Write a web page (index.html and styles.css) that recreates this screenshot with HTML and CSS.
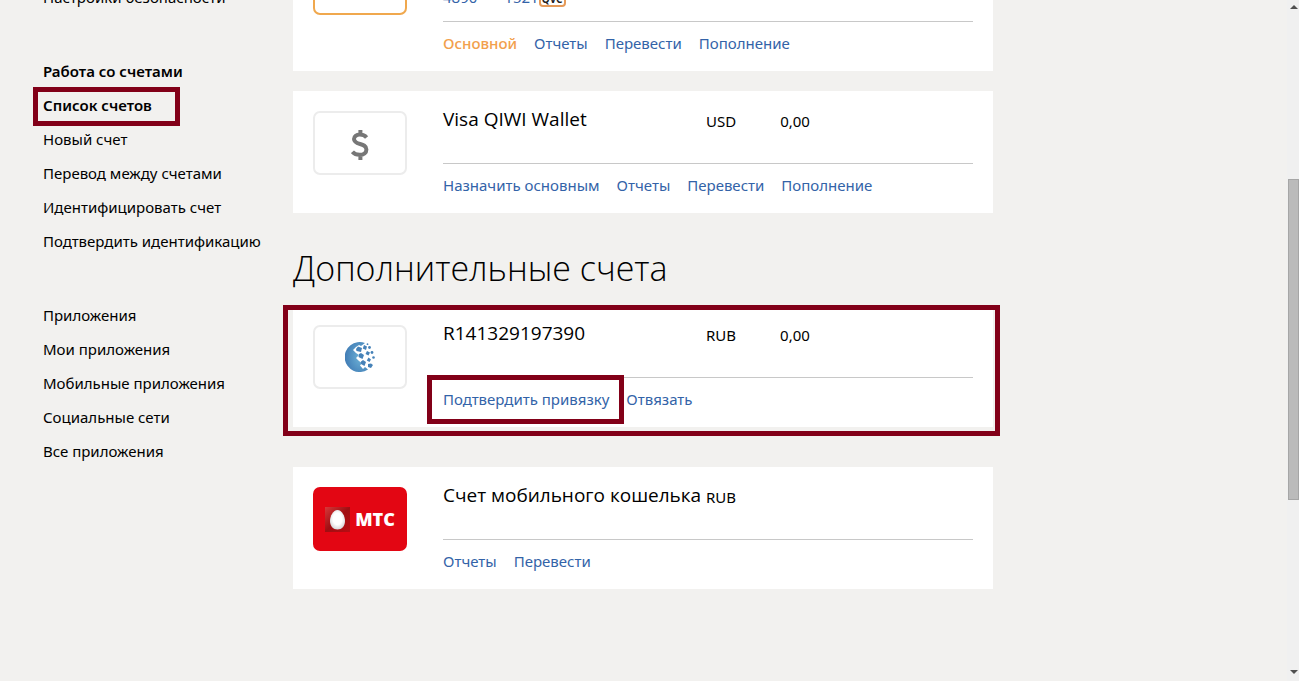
FILE: index.html
```
<!DOCTYPE html>
<html lang="ru">
<head>
<meta charset="utf-8">
<title>Список счетов</title>
<link rel="stylesheet" href="styles.css">
</head>
<body>
<div class="viewport">
  <div class="page">
    <nav class="sidebar">
      <ul class="menu">
        <li><a href="#">Настройки безопасности</a></li>
      </ul>
      <ul class="menu">
        <li><a class="strong" href="#">Работа со счетами</a></li>
        <li class="marked"><a class="strong" href="#">Список счетов</a><span class="frame frame-menu"></span></li>
        <li><a href="#">Новый счет</a></li>
        <li><a href="#">Перевод между счетами</a></li>
        <li><a href="#">Идентифицировать счет</a></li>
        <li><a href="#">Подтвердить идентификацию</a></li>
      </ul>
      <ul class="menu">
        <li><a href="#">Приложения</a></li>
        <li><a href="#">Мои приложения</a></li>
        <li><a href="#">Мобильные приложения</a></li>
        <li><a href="#">Социальные сети</a></li>
        <li><a href="#">Все приложения</a></li>
      </ul>
    </nav>
    <main class="content">
      <section class="cards">
        <article class="card">
          <div class="logo logo-active"></div>
          <div class="body">
            <div class="info info-tall">
              <div class="number"><span>4890</span><span>1521</span><span class="cvv">QVC</span></div>
            </div>
            <div class="actions">
              <span class="primary">Основной</span>
              <a href="#">Отчеты</a>
              <a href="#">Перевести</a>
              <a href="#">Пополнение</a>
            </div>
          </div>
        </article>
        <article class="card">
          <div class="logo logo-dollar">
            <svg width="18" height="32" viewBox="0 0 18 32" fill="none" stroke="#777" stroke-width="4">
              <path d="M15.6 8.6C13.8 6.4 11.6 5.6 8.8 5.6C5.4 5.6 3 7.4 3 10C3 16.6 15.4 13.4 15.4 20.4C15.4 23.8 12.8 25.8 8.6 25.8C5.6 25.8 3 24.8 1.4 22.8M9.4 1V6M9.4 25V31"/>
            </svg>
          </div>
          <div class="body">
            <div class="info">
              <h2 class="name">Visa QIWI Wallet</h2>
              <div class="money"><span>USD</span><span>0,00</span></div>
            </div>
            <div class="actions">
              <a href="#">Назначить основным</a>
              <a href="#">Отчеты</a>
              <a href="#">Перевести</a>
              <a href="#">Пополнение</a>
            </div>
          </div>
        </article>
      </section>
      <h1 class="heading">Дополнительные счета</h1>
      <section class="cards cards-extra">
        <article class="card">
          <div class="logo">
            <svg width="30" height="30" viewBox="0 0 30 30">
              <defs>
                <radialGradient id="globe" cx="0.7" cy="0.5" r="0.8">
                  <stop offset="0" stop-color="#6fb4d8"/>
                  <stop offset="1" stop-color="#3a74b0"/>
                </radialGradient>
              </defs>
              <path fill="url(#globe)" d="M20 1A15 15 0 1 0 23 27.5L20 25L18 27L15 23.5L17 21L14 19L11 16L14 13L11 11L8 8L11 5L14 3L16 4Z"/>
              <g fill="#4682b8">
                <path d="M13 4.5L17 6L16 10L11.5 9L11 7ZM16 11L19 13L17.5 17L13.5 15L14 12ZM18 18L21 20L19.5 24L16 22L16 19.5Z"/>
                <path d="M19 3L22 4.5L21 8L17.8 6.5ZM22 9L25 10.5L23.5 13.5L20.5 12ZM23.5 15.5L26 17.5L24.5 20L21.8 18.5ZM23 22L26 21.5L28 23L26 26L23 25Z"/>
                <circle cx="24.5" cy="5.5" r="1.4"/>
                <circle cx="27" cy="10.5" r="1.4"/>
                <circle cx="28.5" cy="15.5" r="1.3"/>
                <circle cx="22.5" cy="2.2" r="0.9"/>
              </g>
            </svg>
          </div>
          <div class="body">
            <div class="info">
              <h2 class="name">R141329197390</h2>
              <div class="money"><span>RUB</span><span>0,00</span></div>
            </div>
            <div class="actions">
              <span class="marked"><a href="#">Подтвердить привязку</a><span class="frame frame-link"></span></span>
              <a href="#">Отвязать</a>
            </div>
          </div>
          <span class="frame frame-card"></span>
        </article>
        <article class="card">
          <div class="logo logo-mts">
            <svg width="25" height="25" viewBox="0 0 25 25">
              <defs>
                <linearGradient id="box" x1="0" y1="0" x2="1" y2="1">
                  <stop offset="0" stop-color="#d8383a"/>
                  <stop offset="0.5" stop-color="#a00e12"/>
                  <stop offset="1" stop-color="#b80d13"/>
                </linearGradient>
                <radialGradient id="egg" cx="0.5" cy="0.45" r="0.6">
                  <stop offset="0.5" stop-color="#fff"/>
                  <stop offset="1" stop-color="#cfcfd2"/>
                </radialGradient>
              </defs>
              <rect width="25" height="25" fill="url(#box)"/>
              <path d="M12.5 3C16.8 3 20 9 20 14C20 19 16.8 22.5 12.5 22.5S5 19 5 14C5 9 8.2 3 12.5 3Z" fill="url(#egg)"/>
            </svg>
            <span class="mts">МТС</span>
          </div>
          <div class="body">
            <div class="info">
              <h2 class="name">Счет мобильного кошелька</h2>
              <div class="money"><span>RUB</span></div>
            </div>
            <div class="actions">
              <a href="#">Отчеты</a>
              <a href="#">Перевести</a>
            </div>
          </div>
        </article>
      </section>
    </main>
  </div>
  <div class="scrollbar">
    <svg class="arrow" width="8" height="4" viewBox="0 0 8 4"><path d="M0 4L4 0L8 4Z" fill="#505050"/></svg>
    <div class="thumb"></div>
    <svg class="arrow" width="8" height="4" viewBox="0 0 8 4"><path d="M0 0L4 4L8 0Z" fill="#505050"/></svg>
  </div>
</div>
</body>
</html>
```
FILE: styles.css
```
* {
  box-sizing: border-box;
}

body {
  margin: 0;
  background: #f2f1ef;
  color: #000;
  font: 15px/20px "Noto Sans", "Open Sans", sans-serif;
}

a {
  color: #3363a8;
  text-decoration: none;
}

.viewport {
  display: flex;
  height: 100vh;
  overflow: hidden;
}

/* The page is shown scrolled down, so its first card is cut by the top edge. */
.page {
  display: flex;
  flex: 1;
  margin-top: -69px;
  padding-left: 43px;
}

.sidebar {
  display: flex;
  flex-direction: column;
  gap: 40px;
  width: 250px;
  padding-top: 49px;
}

.menu {
  margin: 0;
  padding: 0;
  list-style: none;
  line-height: 34px;
  white-space: nowrap;
}

.menu a {
  color: #000;
}

.menu .strong {
  font-weight: 600;
}

.marked {
  position: relative;
}

.content {
  flex: 1;
  max-width: 700px;
}

.cards {
  display: flex;
  flex-direction: column;
  gap: 20px;
}

.cards-extra {
  gap: 40px;
}

.card {
  position: relative;
  display: flex;
  gap: 36px;
  padding: 20px 20px 18px;
  background: #fff;
}

.logo {
  display: flex;
  flex: none;
  align-items: center;
  justify-content: center;
  width: 94px;
  height: 64px;
  border: 2px solid #ececec;
  border-radius: 7px;
}

.logo-active {
  border-color: #f0a84e;
}

.logo-dollar {
  padding-top: 4px;
}

.logo-mts {
  gap: 5px;
  border: 0;
  background: #e30613;
}

.mts {
  color: #fff;
  font-family: "Open Sans", sans-serif;
  font-size: 18px;
  font-weight: 800;
}

.body {
  flex: 1;
}

.info {
  display: flex;
  height: 53px;
  border-bottom: 1px solid #c8c8c8;
}

.info-tall {
  align-items: flex-end;
  height: 71px;
  padding-bottom: 14px;
}

.number {
  display: flex;
  align-items: flex-end;
  color: #3363a8;
}

.number span + span {
  margin-left: 27px;
}

.number .cvv {
  width: 27px;
  height: 16px;
  border: 2px solid #e59a58;
  border-radius: 4px;
  color: #222;
  font-size: 10px;
  font-weight: 700;
  line-height: 12px;
  text-align: center;
}

.number span + .cvv {
  margin-left: 0;
}

.name {
  width: 263px;
  margin: 0;
  font-family: "Open Sans", "Noto Sans", sans-serif;
  font-size: 19px;
  font-weight: 400;
  line-height: 16px;
  white-space: nowrap;
}

.money {
  display: flex;
  gap: 44px;
}

.actions {
  display: flex;
  gap: 17px;
  padding-top: 11px;
  white-space: nowrap;
}

.primary {
  color: #f2a04c;
  font-weight: 500;
}

.heading {
  margin: 31px 0 13px;
  font-family: "Open Sans", "Noto Sans", sans-serif;
  font-size: 34px;
  font-weight: 300;
  line-height: 48px;
}

.frame {
  position: absolute;
  border: 5px solid #820018;
  pointer-events: none;
}

.frame-menu {
  top: -1px;
  left: -10px;
  width: 147px;
  height: 39px;
}

.frame-link {
  inset: -14px -15px -15px -16px;
}

.frame-card {
  inset: 0 -7px -9px -10px;
}

.scrollbar {
  display: flex;
  flex-direction: column;
  align-items: center;
  justify-content: space-between;
  width: 12px;
  padding: 5px 0 7px 1px;
  background: #f0f0f0;
}

.thumb {
  width: 100%;
  height: 47vh;
  border: 1px solid #a6a6a6;
  background: #bbb;
}
```
